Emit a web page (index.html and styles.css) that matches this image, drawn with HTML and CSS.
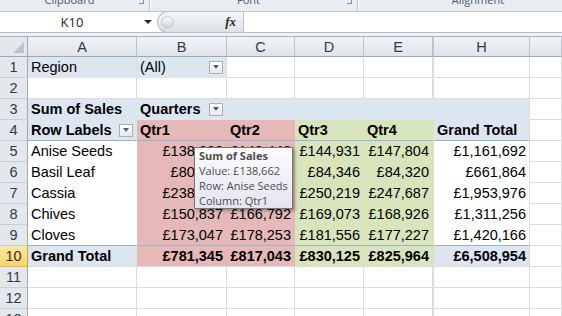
FILE: index.html
```html
<!DOCTYPE html>
<html>
<head>
  <title>Sum of Sales</title>
  <link rel="stylesheet" href="styles.css">
</head>
<body>
  <!-- ribbon group labels (cut off at top) -->
  <div class="ribbon">
    <div class="group g-clip"><span class="glabel">Clipboard</span><span class="launch"></span></div>
    <div class="group g-font"><span class="glabel">Font</span><span class="launch"></span></div>
    <div class="group g-align"><span class="glabel">Alignment</span></div>
  </div>

  <!-- formula bar -->
  <div class="fbar">
    <div class="namebox"><span class="name">K10</span><span class="arrow"></span></div>
    <div class="fxbox"><span class="grip"></span><span class="fx">fx</span></div>
    <div class="finput"></div>
  </div>
  <div class="fgap"></div>

  <div class="sheet">
    <div class="row head">
      <div class="c corner"><span class="tri"></span></div>
      <div class="c hc">A</div>
      <div class="c hc">B</div>
      <div class="c hc">C</div>
      <div class="c hc">D</div>
      <div class="c hc thick">E</div>
      <div class="c hc">H</div>
      <div class="c hc"></div>
    </div>

    <div class="row">
      <div class="c rh">1</div>
      <div class="c blue1">Region</div>
      <div class="c blue1 sp">(All)<span class="dd"></span></div>
      <div class="c"></div><div class="c"></div><div class="c thick"></div><div class="c"></div><div class="c"></div>
    </div>

    <div class="row">
      <div class="c rh">2</div>
      <div class="c"></div><div class="c"></div><div class="c"></div><div class="c"></div><div class="c thick"></div><div class="c"></div><div class="c"></div>
    </div>

    <div class="row">
      <div class="c rh">3</div>
      <div class="c blue b">Sum of Sales</div>
      <div class="c blue b sp">Quarters<span class="dd"></span></div>
      <div class="c blue"></div><div class="c blue"></div><div class="c blue thick"></div>
      <div class="c blue edge"></div>
      <div class="c"></div>
    </div>

    <div class="row">
      <div class="c rh">4</div>
      <div class="c blue b sp line">Row Labels<span class="dd"></span></div>
      <div class="c pink b line">Qtr1</div>
      <div class="c pink b line">Qtr2</div>
      <div class="c green b line">Qtr3</div>
      <div class="c green b line thick">Qtr4</div>
      <div class="c blue b line edge">Grand Total</div>
      <div class="c"></div>
    </div>

    <div class="row">
      <div class="c rh">5</div>
      <div class="c wh">Anise Seeds</div>
      <div class="c pink n">£138,662</div>
      <div class="c pink n">£148,448</div>
      <div class="c green n">£144,931</div>
      <div class="c green n thick">£147,804</div>
      <div class="c wh n edge">£1,161,692</div>
      <div class="c"></div>
    </div>

    <div class="row">
      <div class="c rh">6</div>
      <div class="c wh">Basil Leaf</div>
      <div class="c pink n">£80,287</div>
      <div class="c pink n">£83,997</div>
      <div class="c green n">£84,346</div>
      <div class="c green n thick">£84,320</div>
      <div class="c wh n edge">£661,864</div>
      <div class="c"></div>
    </div>

    <div class="row">
      <div class="c rh">7</div>
      <div class="c wh">Cassia</div>
      <div class="c pink n">£238,512</div>
      <div class="c pink n">£239,553</div>
      <div class="c green n">£250,219</div>
      <div class="c green n thick">£247,687</div>
      <div class="c wh n edge">£1,953,976</div>
      <div class="c"></div>
    </div>

    <div class="row">
      <div class="c rh">8</div>
      <div class="c wh">Chives</div>
      <div class="c pink n">£150,837</div>
      <div class="c pink n">£166,792</div>
      <div class="c green n">£169,073</div>
      <div class="c green n thick">£168,926</div>
      <div class="c wh n edge">£1,311,256</div>
      <div class="c"></div>
    </div>

    <div class="row">
      <div class="c rh">9</div>
      <div class="c wh line">Cloves</div>
      <div class="c pink n line">£173,047</div>
      <div class="c pink n line">£178,253</div>
      <div class="c green n line">£181,556</div>
      <div class="c green n line thick">£177,227</div>
      <div class="c wh n line edge">£1,420,166</div>
      <div class="c"></div>
    </div>

    <div class="row">
      <div class="c rh sel">10</div>
      <div class="c blue b foot">Grand Total</div>
      <div class="c pink b n foot">£781,345</div>
      <div class="c pink b n foot">£817,043</div>
      <div class="c green b n foot">£830,125</div>
      <div class="c green b n foot thick">£825,964</div>
      <div class="c blue b n foot edge">£6,508,954</div>
      <div class="c"></div>
    </div>

    <div class="row">
      <div class="c rh">11</div>
      <div class="c"></div><div class="c"></div><div class="c"></div><div class="c"></div><div class="c thick"></div><div class="c"></div><div class="c"></div>
    </div>

    <div class="row">
      <div class="c rh">12</div>
      <div class="c"></div><div class="c"></div><div class="c"></div><div class="c"></div><div class="c thick"></div><div class="c"></div><div class="c"></div>
    </div>

    <div class="row">
      <div class="c rh">13</div>
      <div class="c"></div><div class="c"></div><div class="c"></div><div class="c"></div><div class="c thick"></div><div class="c"></div><div class="c"></div>
    </div>

    <!-- hover tooltip over B5 -->
    <div class="tip">
      <div class="tip-title">Sum of Sales</div>
      <div>Value: £138,662</div>
      <div>Row: Anise Seeds</div>
      <div>Column: Qtr1</div>
    </div>
  </div>
</body>
</html>
```

FILE: styles.css
```css
/* page */
body {
  margin: 0;
  font-family: "Liberation Sans", Arial, sans-serif;
  background: #fff;
  overflow: hidden;
}

/* ribbon strip */
.ribbon {
  display: flex;
  height: 11px;
  background: #e9edf2;
  border-bottom: 1px solid #bcc4ce;
  overflow: hidden;
  font-family: "Open Sans", sans-serif;
  font-size: 11px;
  color: #4a5870;
}

.group {
  display: flex;
  border-right: 1px solid #c1c9d3;
  box-shadow: 1px 0 0 #fbfcfd;
}

.g-clip { width: 149px; }
.g-font { width: 207px; }
.g-align {
  flex: 1;
  padding-left: 36px;
  border-right: none;
  box-shadow: none;
}

.glabel {
  flex: 1;
  text-align: center;
  line-height: 11px;
  margin-top: -6px;
}

.launch {
  width: 4px;
  height: 3px;
  margin: 0 5px 0 0;
  border-right: 1px solid #8390a2;
  border-bottom: 1px solid #8390a2;
}

/* formula bar */
.fbar {
  display: flex;
  height: 20px;
  background: #fff;
  border-bottom: 1px solid #b4bcc7;
}

.namebox {
  width: 157px;
  display: flex;
  align-items: center;
  font-family: "Open Sans", sans-serif;
  font-size: 13px;
  color: #1e1e1e;
}

.name {
  flex: 1;
  text-align: center;
}

.arrow {
  width: 0;
  height: 0;
  margin-right: 5px;
  border-left: 4px solid transparent;
  border-right: 4px solid transparent;
  border-top: 4px solid #2b2b2b;
}

.fxbox {
  width: 86px;
  box-sizing: border-box;
  display: flex;
  align-items: center;
  background: linear-gradient(#f5f6f8, #dde1e6);
  border: 1px solid #b9c0c9;
  border-right: none;
  border-radius: 11px 0 0 11px;
  margin: -1px 0 -1px 0;
  padding-left: 3px;
}

.grip {
  width: 11px;
  height: 11px;
  border-radius: 50%;
  background: linear-gradient(#fafafa, #cdd2d8);
  border: 1px solid #c4cad2;
}

.fx {
  margin-left: auto;
  margin-right: 7px;
  font-family: "Liberation Serif", serif;
  font-style: italic;
  font-weight: bold;
  font-size: 13px;
  color: #2a2a2a;
}

.finput {
  flex: 1;
  border-left: 1px solid #b9c0c9;
}

.fgap {
  height: 3px;
  background: #eef1f5;
  border-bottom: 1px solid #a8b1bd;
}

/* sheet grid */
.sheet {
  position: relative;
}

.row {
  display: grid;
  grid-template-columns: 28px 109px 90px 68px 69px 70px 96px 1fr;
  height: 21px;
}

.head {
  height: 20px;
}

.c {
  box-sizing: border-box;
  display: flex;
  align-items: center;
  padding: 0 3px;
  border-right: 1px solid #dadcdd;
  border-bottom: 1px solid #dadcdd;
  white-space: nowrap;
  overflow: hidden;
  font-size: 14.5px;
  color: #000;
}

.thick {
  border-right-width: 2px;
}

.n { justify-content: flex-end; }
.b { font-weight: bold; }
.sp { justify-content: space-between; }

/* headers */
.hc {
  justify-content: center;
  background: linear-gradient(#f1f3f6, #e0e4e9);
  border-right-color: #bcc3cc;
  border-bottom-color: #9ea8b4;
  color: #2f3b4c;
}

.corner {
  justify-content: flex-end;
  align-items: flex-end;
  padding: 0 3px 3px 0;
  background: #e4e7ec;
  border-right-color: #9ea8b4;
  border-bottom-color: #9ea8b4;
}

.tri {
  width: 0;
  height: 0;
  border-left: 11px solid transparent;
  border-bottom: 11px solid #bcc2ca;
}

.rh {
  justify-content: center;
  padding: 0;
  background: #e4e7ec;
  border-right-color: #9ea8b4;
  border-bottom-color: #c8ced6;
  color: #2f3b4c;
}

.rh.sel {
  background: linear-gradient(#fce7a6, #f7d46c);
  border-right-color: #d89e32;
  border-bottom-color: #e3b552;
  color: #3a2e10;
}

/* pivot fills */
.blue1 {
  background: #dce6f1;
  border-bottom-color: #dce6f1;
}

.blue {
  background: #dce6f1;
  border-color: #dce6f1;
}

.pink {
  background: #e6b8b7;
  border-color: #e6b8b7;
}

.green {
  background: #d8e4bc;
  border-color: #d8e4bc;
}

.wh {
  border-color: #fff;
}

.edge {
  border-right-color: #dadcdd;
}

.line {
  border-bottom-color: #95b3d7;
}

.foot {
  border-bottom-color: #dadcdd;
}

/* filter button */
.dd {
  box-sizing: border-box;
  width: 14px;
  height: 13px;
  flex: none;
  display: flex;
  align-items: center;
  justify-content: center;
  border: 1px solid #a9b0ba;
  background: linear-gradient(#ffffff, #e4e7eb);
}

.dd::after {
  content: "";
  border-left: 3.5px solid transparent;
  border-right: 3.5px solid transparent;
  border-top: 4px solid #5a5f66;
}

/* tooltip */
.tip {
  position: absolute;
  left: 194px;
  top: 110px;
  padding: 0 4px;
  border: 1px solid #767676;
  background: linear-gradient(#fdfdfe, #e3e4ee);
  box-shadow: 2px 2px 3px rgba(0, 0, 0, 0.3);
  font-family: "Open Sans", sans-serif;
  font-size: 11px;
  line-height: 15px;
  color: #4d4d4d;
  white-space: nowrap;
}

.tip-title {
  font-weight: bold;
}
```
